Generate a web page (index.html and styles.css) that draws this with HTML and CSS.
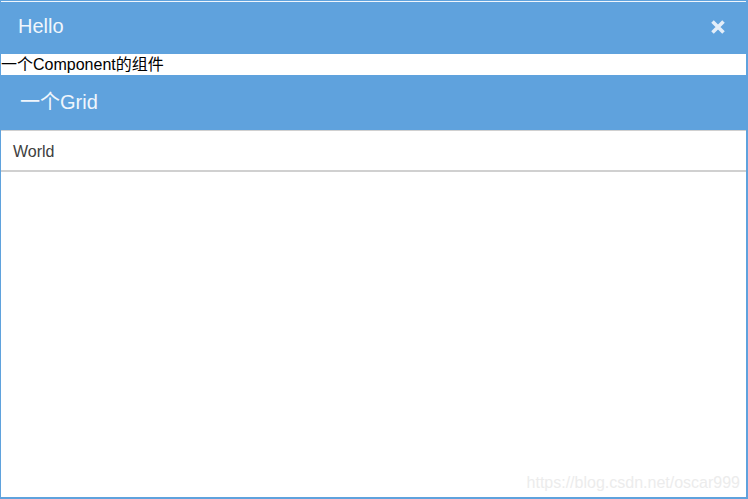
FILE: index.html
```html
<!DOCTYPE html>
<html>

<head>
  <title>Hello</title>
  <link rel="stylesheet" href="styles.css">
</head>

<body>
  <div class="window">
    <div class="win-header">
      <span class="win-title">Hello</span>
      <span class="win-close">
        <svg width="16" height="16" viewBox="0 0 16 16">
          <path d="M2.5 2.5 L13.5 13.5 M13.5 2.5 L2.5 13.5" stroke="#e3eef9" stroke-width="3.6" stroke-linecap="butt" fill="none"/>
        </svg>
      </span>
    </div>
    <div class="win-body">
      <div class="component-text">一个Component的组件</div>
      <div class="grid">
        <div class="grid-header">一个Grid</div>
        <div class="grid-row">World</div>
      </div>
    </div>
    <div class="watermark">https://blog.csdn.net/oscar999</div>
  </div>
</body>

</html>
```

FILE: styles.css
```css
body {
  margin: 0;
  background-color: #fff;
  font-family: "Liberation Sans", "Noto Sans CJK SC", sans-serif;
}
.window {
  position: relative;
  width: 748px;
  height: 499px;
  box-sizing: border-box;
  border-style: solid;
  border-color: #5fa2dd;
  border-width: 1px 2px 2px 1px;
  background-color: #fff;
  display: flex;
  flex-direction: column;
}
.win-header {
  height: 52px;
  border-top: 1px solid #f0f6fc;
  background-color: #5fa2dd;
  display: flex;
  align-items: center;
  justify-content: space-between;
  padding: 0 20px 0 17px;
}
.win-title {
  color: #f0f6fc;
  font-size: 20px;
  line-height: 48px;
  padding-bottom: 4px;
}
.win-close {
  display: flex;
  margin-bottom: 2px;
}
.win-body {
  flex: 1;
}
.component-text {
  color: #000;
  font-size: 16px;
  line-height: 21px;
}
.grid-header {
  height: 55px;
  line-height: 55px;
  background-color: #5fa2dd;
  color: #f0f6fc;
  font-size: 20px;
  padding-left: 19px;
  border-bottom: 1px solid #d0d0d0;
}
.grid-row {
  height: 39px;
  line-height: 41px;
  padding-left: 12px;
  color: #404040;
  font-size: 16px;
  border-bottom: 2px solid #d0d0d0;
}
.watermark {
  position: absolute;
  right: 6px;
  bottom: 5px;
  color: #ececec;
  font-size: 16px;
}
```
